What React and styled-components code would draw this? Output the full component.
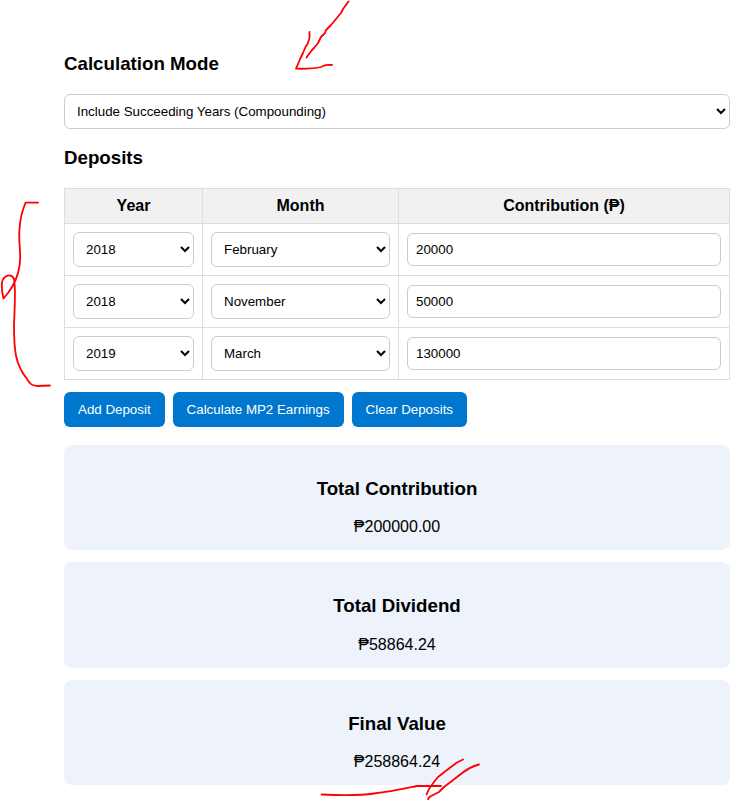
import React, { useState } from "react";
import styled, { createGlobalStyle } from "styled-components";

const YEARS = ["2018", "2019", "2020", "2021", "2022", "2023"];
const MONTHS = [
  "January", "February", "March", "April", "May", "June",
  "July", "August", "September", "October", "November", "December",
];

const initialDeposits = [
  { year: "2018", month: "February", amount: "20000" },
  { year: "2018", month: "November", amount: "50000" },
  { year: "2019", month: "March", amount: "130000" },
];

const results = [
  { title: "Total Contribution", value: "₱200000.00" },
  { title: "Total Dividend", value: "₱58864.24" },
  { title: "Final Value", value: "₱258864.24" },
];

const strokes = [
  // arrow
  "M348.5 1.5 L343 9 L341 13 L331 25 L328 28 L326 30 L325 33 L321 37 L318 43 L314 48 L312 50 L309 54 L306.5 57.5",
  "M309.5 32 L309.5 38 L307.5 44 L305.5 47 L303 53 L300.5 58 L298 64 L296 68.7 C306 68.8 314 69 321 67 C325 65 326 64.5 332 65",
  // brace
  "M38 202.7 L25.5 202.7 C22 212 20 218 19.3 232 C18.8 246 21.5 256 19.5 266 C18 276 14 285 8 293 L3.5 298.5 C2 293 1.5 288 2 282 C4 275 11 273 14 279 C16 290 14.5 310 14 325 C14 350 15 364 27 379 C30 384 32 386 38 386 L50 385.5",
  // underline and tick
  "M321.5 794.5 C342 795.5 358 796 374 793.5 C392 791.5 407 788 417 786 L441 786",
  "M463 759.5 L457 762.5 L447 770 L438 777 L434 782 L429 789 L426.5 794.5",
  "M479 764.5 C471 766 463 772 457 777 L444 787 L439 792 L431 796 L428.5 798 L427.5 802",
];

function App() {
  const [mode, setMode] = useState("compounding");
  const [deposits, setDeposits] = useState(initialDeposits);

  const updateDeposit = (index, key, value) => {
    setDeposits(deposits.map((d, i) => (i === index ? { ...d, [key]: value } : d)));
  };

  return (
    <Page>
      <GlobalStyle />
      <Heading>Calculation Mode</Heading>
      <ModeSelect value={mode} onChange={(e) => setMode(e.target.value)}>
        <option value="compounding">Include Succeeding Years (Compounding)</option>
        <option value="single">Single Year Only</option>
      </ModeSelect>
      <Heading>Deposits</Heading>
      <Table>
        <thead>
          <tr>
            <Th $width="138px">Year</Th>
            <Th $width="196px">Month</Th>
            <Th>Contribution (₱)</Th>
          </tr>
        </thead>
        <tbody>
          {deposits.map((deposit, i) => (
            <tr key={i}>
              <Td>
                <Select value={deposit.year} onChange={(e) => updateDeposit(i, "year", e.target.value)}>
                  {YEARS.map((y) => (
                    <option key={y}>{y}</option>
                  ))}
                </Select>
              </Td>
              <Td>
                <Select value={deposit.month} onChange={(e) => updateDeposit(i, "month", e.target.value)}>
                  {MONTHS.map((m) => (
                    <option key={m}>{m}</option>
                  ))}
                </Select>
              </Td>
              <Td>
                <Input
                  type="number"
                  value={deposit.amount}
                  onChange={(e) => updateDeposit(i, "amount", e.target.value)}
                />
              </Td>
            </tr>
          ))}
        </tbody>
      </Table>
      <Buttons>
        <Button onClick={() => setDeposits([...deposits, { year: "2018", month: "January", amount: "" }])}>
          Add Deposit
        </Button>
        <Button>Calculate MP2 Earnings</Button>
        <Button onClick={() => setDeposits([])}>Clear Deposits</Button>
      </Buttons>
      <Results>
        {results.map((result) => (
          <Card key={result.title}>
            <CardTitle>{result.title}</CardTitle>
            <CardValue>{result.value}</CardValue>
          </Card>
        ))}
      </Results>
      <Markup width="742" height="800" viewBox="0 0 742 800">
        {strokes.map((d) => (
          <path key={d} d={d} />
        ))}
      </Markup>
    </Page>
  );
}

export default App;

const GlobalStyle = createGlobalStyle`
  body {
    margin: 0;
    background-color: #ffffff;
  }
`;

const Page = styled.div`
  position: relative;
  box-sizing: border-box;
  width: 742px;
  height: 800px;
  overflow: hidden;
  padding: 53px 12px 0 64px;
  font-family: Arial, "Liberation Sans", sans-serif;
  font-size: 16px;
  color: #000000;
`;

const Heading = styled.h3`
  margin: 0;
  font-size: 18.72px;
  line-height: 22px;
`;

const Select = styled.select`
  display: block;
  box-sizing: border-box;
  width: 100%;
  height: 35px;
  padding: 8px;
  border: 1px solid #cccccc;
  border-radius: 6px;
  background-color: #ffffff;
  color: #000000;
  font-family: Arial, "Liberation Sans", sans-serif;
  font-size: 13.333px;
`;

const ModeSelect = styled(Select)`
  margin: 19px 0 18px;
`;

const Table = styled.table`
  width: 100%;
  margin-top: 19px;
  border-collapse: collapse;
  table-layout: fixed;
`;

const Th = styled.th`
  box-sizing: border-box;
  width: ${(props) => props.$width || "auto"};
  padding: 8px;
  border: 1px solid #dddddd;
  background-color: #f1f1f1;
  line-height: 18px;
`;

const Td = styled.td`
  padding: 8px;
  border: 1px solid #dddddd;
`;

const Input = styled.input`
  display: block;
  box-sizing: border-box;
  width: 100%;
  height: 33px;
  padding: 8px;
  border: 1px solid #cccccc;
  border-radius: 6px;
  font-family: Arial, "Liberation Sans", sans-serif;
  font-size: 13.333px;
`;

const Buttons = styled.div`
  display: flex;
  gap: 8px;
  margin-top: 12px;
`;

const Button = styled.button`
  height: 35px;
  padding: 0 14px;
  border: none;
  border-radius: 6px;
  background-color: #0077cf;
  color: #ffffff;
  font-family: Arial, "Liberation Sans", sans-serif;
  font-size: 13.333px;
  cursor: pointer;
`;

const Results = styled.div`
  display: flex;
  flex-direction: column;
  gap: 12px;
  margin-top: 18px;
`;

const Card = styled.div`
  box-sizing: border-box;
  height: 105.3px;
  padding-top: 33px;
  border-radius: 8px;
  background-color: #edf2fb;
  text-align: center;
`;

const CardTitle = styled.h3`
  margin: 0;
  font-size: 18.72px;
  line-height: 22px;
`;

const CardValue = styled.div`
  margin-top: 18.4px;
  line-height: 18px;
`;

const Markup = styled.svg`
  position: absolute;
  top: 0;
  left: 0;
  pointer-events: none;
  fill: none;
  stroke: #ff0000;
  stroke-width: 1.8;
  stroke-linecap: round;
  stroke-linejoin: round;
`;
